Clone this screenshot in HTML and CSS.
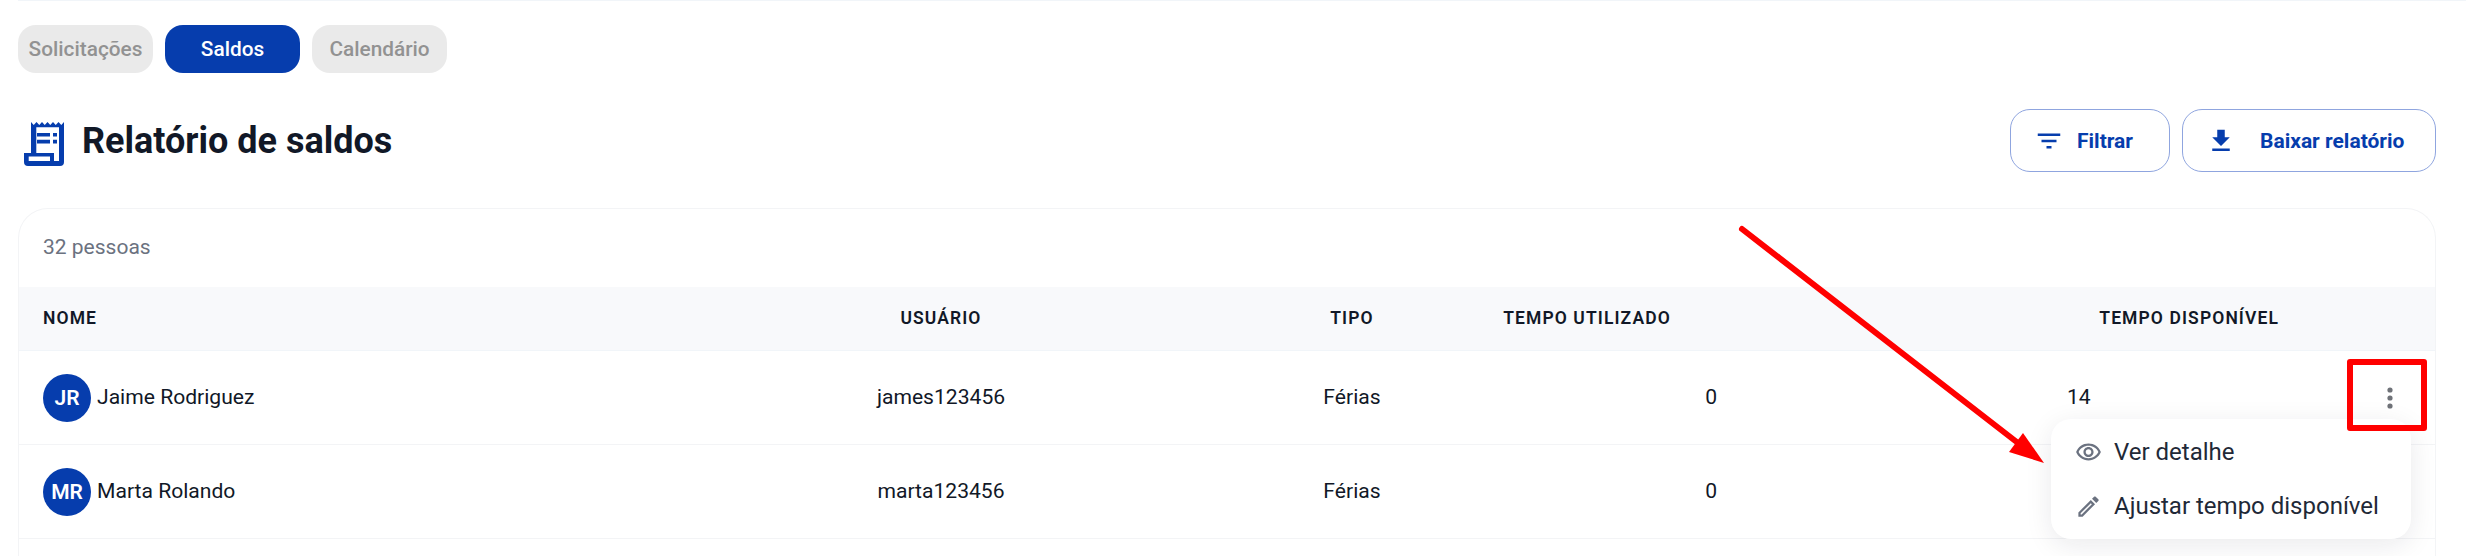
FILE: index.html
```html
<!DOCTYPE html>
<html lang="pt-BR">
<head>
<meta charset="utf-8">
<title>Relatório de saldos</title>
<link rel="stylesheet" href="styles.css">
</head>
<body>
<div class="page">
  <div class="top-rule"></div>
  <nav class="tabs">
    <button class="tab">Solicitações</button>
    <button class="tab tab-active">Saldos</button>
    <button class="tab">Calendário</button>
  </nav>
  <header class="title-row">
    <div class="title-group">
      <svg class="title-icon" viewBox="0 0 40 44" width="40" height="44"><path fill-rule="evenodd" d="M7 0l2.75 3 2.75-3 2.75 3 2.75-3 2.75 3 2.75-3 2.75 3 2.75-3 2.75 3 2.75-3 2.75 3L40 0V40a4 4 0 0 1-4 4H4a4 4 0 0 1-4-4V31H7ZM12.3 5.2H35V39H30V31H12.3ZM4.7 34.500H26V39H4.7ZM13 11H26V14.600H13ZM13 17.700H26V21.600H13ZM29 11H33V14.600H29ZM29 17.700H33V21.600H29Z"/></svg>
      <h1 class="title">Relatório de saldos</h1>
    </div>
    <div class="actions">
      <button class="btn btn-filter"><svg class="btn-icon" viewBox="0 0 24 24"><path d="M10 18h4v-2h-4v2zM3 6v2h18V6H3zm3 7h12v-2H6v2z"/></svg>Filtrar</button>
      <button class="btn btn-download"><svg class="btn-icon" viewBox="0 0 24 24"><path d="M19 9h-4V3H9v6H5l7 7 7-7zM5 18v2h14v-2H5z"/></svg>Baixar relatório</button>
    </div>
  </header>
  <section class="card">
    <div class="count">32 pessoas</div>
    <div class="grid head">
      <div class="c-name">NOME</div>
      <div class="c-center">USUÁRIO</div>
      <div class="c-center">TIPO</div>
      <div class="c-center c-used-head">TEMPO UTILIZADO</div>
      <div class="c-avail-head">TEMPO DISPONÍVEL</div>
      <div></div>
    </div>
    <div class="grid row">
      <div class="c-name person"><span class="avatar">JR</span><span class="lift">Jaime Rodriguez</span></div>
      <div class="c-center lift">james123456</div>
      <div class="c-center lift">Férias</div>
      <div class="c-used lift">0</div>
      <div class="c-avail lift">14</div>
      <div class="c-kebab">
        <svg class="kebab" viewBox="0 0 8 24" width="8" height="24"><circle cx="4" cy="4" r="2.600"/><circle cx="4" cy="12" r="2.600"/><circle cx="4" cy="20" r="2.600"/></svg>
        <span class="red-box"></span>
      </div>
    </div>
    <div class="grid row">
      <div class="c-name person"><span class="avatar">MR</span><span class="lift">Marta Rolando</span></div>
      <div class="c-center lift">marta123456</div>
      <div class="c-center lift">Férias</div>
      <div class="c-used lift">0</div>
      <div class="c-avail"></div>
      <div class="c-kebab"></div>
    </div>
  </section>
  <svg class="arrow" viewBox="0 0 2466 556" width="2466" height="556">
    <line x1="1742" y1="229" x2="2018" y2="443" class="arrow-line"/>
    <polygon points="2044,463 2023,433 2009,452" class="arrow-head"/>
  </svg>
  <div class="menu">
    <div class="menu-item"><svg class="menu-icon" viewBox="0 0 24 24"><path d="M12 6c3.790 0 7.170 2.130 8.820 5.500C19.170 14.870 15.790 17 12 17s-7.170-2.130-8.820-5.500C4.830 8.130 8.210 6 12 6m0-2C7 4 2.730 7.110 1 11.500 2.730 15.890 7 19 12 19s9.270-3.110 11-7.500C21.270 7.110 17 4 12 4zm0 5c1.380 0 2.500 1.120 2.500 2.500S13.380 14 12 14s-2.500-1.120-2.500-2.500S10.620 9 12 9m0-2c-2.480 0-4.500 2.020-4.500 4.500S9.520 16 12 16s4.500-2.020 4.500-4.500S14.480 7 12 7z"/></svg>Ver detalhe</div>
    <div class="menu-item"><svg class="menu-icon" viewBox="0 0 24 24"><path d="M14.060 9.020l.92.92L5.920 19H5v-.92l9.060-9.060M17.660 3c-.25 0-.51.1-.7.29l-1.830 1.830 3.750 3.750 1.830-1.830c.39-.39.39-1.020 0-1.410l-2.340-2.340c-.2-.2-.45-.29-.71-.29zm-3.600 3.190L3 17.250V21h3.750L17.810 9.940l-3.750-3.750z"/></svg>Ajustar tempo disponível</div>
  </div>
</div>
</body>
</html>
```
FILE: styles.css
```css
* { box-sizing: border-box; }
html, body { margin: 0; height: 556px; overflow: hidden; background: #fff; }
body { font-family: Roboto, "Liberation Sans", sans-serif; color: #111827; }
.page { position: relative; width: 2466px; height: 556px; overflow: hidden; padding: 0 30px 0 18px; }
.top-rule { height: 1px; background: #f1f5f9; margin-right: -30px; }
.tabs { display: flex; gap: 12px; margin-top: 24px; }
.tab { width: 135px; height: 48px; border: 0; border-radius: 18px; background: #eaeaea; color: #929292; font: 500 20.800px Roboto, sans-serif; padding: 0; }
.tab-active { background: #063dad; color: #fff; }
.title-row { display: flex; justify-content: space-between; align-items: center; height: 63px; margin-top: 36px; margin-bottom: 36px; }
.title-group { display: flex; align-items: center; gap: 18px; padding-left: 6px; }
.title-icon { fill: #063dad; display: block; margin-top: 6px; }
.title { margin: 0; padding-top: 2px; font-size: 36px; font-weight: 700; line-height: 1.2; color: #111827; }
.actions { display: flex; gap: 12px; }
.btn { display: flex; align-items: center; height: 63px; border: 1.5px solid #8fa5df; border-radius: 20px; background: #fff; color: #063dad; font: 700 21px Roboto, sans-serif; }
.btn-filter { width: 160px; padding: 0 0 0 23px; gap: 13px; }
.btn-download { width: 254px; padding: 0 0 0 23px; gap: 24px; }
.btn-icon { width: 30px; height: 30px; fill: #063dad; flex: none; }
.card { border: 1.5px solid #f3f4f6; border-bottom: 0; border-radius: 30px 30px 0 0; height: 400px; }
.count { height: 78px; padding-left: 24px; padding-bottom: 2px; display: flex; align-items: center; font-size: 21px; font-weight: 400; color: #6b7280; }
.grid { display: grid; grid-template-columns: 581px 682px 140px 328px 596px 88.500px; align-items: center; }
.head { height: 64px; padding-bottom: 2px; background: #f8f9fb; border-bottom: 1px solid #f1f5f9; font-size: 17.500px; font-weight: 600; letter-spacing: 1.100px; }
.row { height: 94px; border-bottom: 1.500px solid #f3f4f6; font-size: 21.100px; font-weight: 450; color: #111827; }
.lift { padding-bottom: 2px; }
.c-name { padding-left: 24px; }
.c-center { text-align: center; }
.c-used-head { padding-left: 2px; }
.c-used { text-align: right; padding-right: 33px; }
.c-avail { padding-left: 317px; }
.c-avail-head { text-align: right; padding-right: 67px; }
.person { display: flex; align-items: center; gap: 6px; }
.avatar { width: 48px; height: 48px; border-radius: 50%; background: #063dad; color: #fff; display: flex; align-items: center; justify-content: center; font-size: 21px; font-weight: 600; flex: none; }
.c-kebab { position: relative; height: 100%; display: flex; align-items: center; justify-content: center; }
.kebab { fill: #6f7278; display: block; }
.red-box { position: absolute; left: 1px; top: 8px; width: 80px; height: 72px; border: 6px solid #f00; border-radius: 3px; z-index: 4; }
.arrow { position: absolute; left: 0; top: 0; pointer-events: none; z-index: 2; }
.arrow-line { stroke: #f00; stroke-width: 6; stroke-linecap: round; }
.arrow-head { fill: #f00; }
.menu { position: absolute; left: 2051px; top: 419px; width: 360px; height: 120px; padding: 6px 0; background: #fff; border-radius: 20px; box-shadow: 0 6px 28px rgba(17, 24, 39, 0.09); z-index: 3; }
.menu-item { display: flex; align-items: center; gap: 12px; height: 54px; padding-left: 24px; font-size: 24px; font-weight: 400; color: #1f2937; }
.menu-icon { width: 27px; height: 27px; fill: #6b7280; flex: none; }
```
